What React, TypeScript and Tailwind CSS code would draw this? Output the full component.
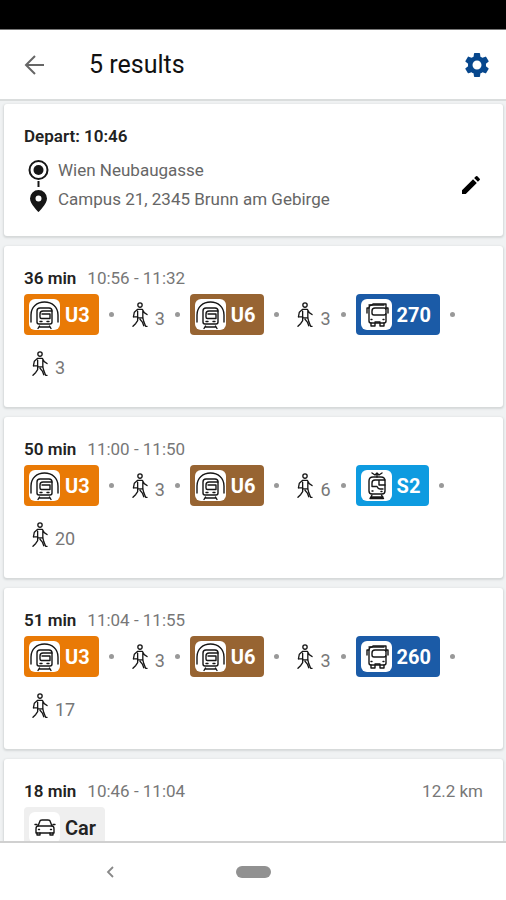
import { MdSettings, MdEdit } from "react-icons/md";

type Kind = "metro" | "bus" | "train";
type Leg = { walk: number } | { kind: Kind; line: string; color: string };

const u3: Leg = { kind: "metro", line: "U3", color: "bg-[#e97a06]" };
const u6: Leg = { kind: "metro", line: "U6", color: "bg-[#976432]" };

const trips: { duration: string; time: string; legs: Leg[] }[] = [
  {
    duration: "36 min",
    time: "10:56 - 11:32",
    legs: [u3, { walk: 3 }, u6, { walk: 3 }, { kind: "bus", line: "270", color: "bg-[#1b5ba7]" }, { walk: 3 }],
  },
  {
    duration: "50 min",
    time: "11:00 - 11:50",
    legs: [u3, { walk: 3 }, u6, { walk: 6 }, { kind: "train", line: "S2", color: "bg-[#0e9be0]" }, { walk: 20 }],
  },
  {
    duration: "51 min",
    time: "11:04 - 11:55",
    legs: [u3, { walk: 3 }, u6, { walk: 3 }, { kind: "bus", line: "260", color: "bg-[#1b5ba7]" }, { walk: 17 }],
  },
];

const stroke = {
  fill: "none",
  stroke: "#161616",
  strokeWidth: 1.4,
  strokeLinecap: "round",
  strokeLinejoin: "round",
} as const;

function MetroIcon() {
  return (
    <svg viewBox="0 0 31 31" className="size-full" {...stroke}>
      <path d="M2 23v-7C2 8 8 3 15.500 3S29 8 29 16v7" />
      <path d="M8 23V12q0-3 3-3h9q3 0 3 3v11q0 2-2 2H10q-2 0-2-2z" />
      <path d="M23 12h-9q-3 0-3 3v3q0 1.500 1.500 1.500H21V15h-8M11 22.500h2M18 22.500h2" />
      <path d="M10.500 27l-1.500 2.500M20.500 27l1.500 2.500M10 28h11" />
    </svg>
  );
}

function BusIcon() {
  return (
    <svg viewBox="0 0 31 31" className="size-full" {...stroke}>
      <path d="M11 6l1-1h13v5M11 6q-3 0-3 3v13q0 2 2 2h13q2 0 2-2v-7" />
      <path d="M8 9H6v5M25 9h2v5M8 6h15" />
      <path d="M14 9h9q2 0 2 2v3q0 2-2 2H13q-2 0-2-2v-2q0-3 3-3z" />
      <path d="M10 24v3h4v-3M19 24v3h4v-3M10 20.500h1M22 20.500h1M14 23h5" />
    </svg>
  );
}

function TrainIcon() {
  return (
    <svg viewBox="0 0 31 31" className="size-full" {...stroke}>
      <path d="M11 3l3 2 2-2 2 2 3-2M16 3v4" />
      <path d="M8 21V11q0-4 4-4h8q4 0 4 4v10q0 3-3 3H11q-3 0-3-3z" />
      <path d="M24 10H14q-3 0-3 3v3.500h5q1 2.500 3 2.500h3M18 10v5h6M11 21h1M20 21.500h1" />
      <path d="M11 25l-2 3.500M20.500 25l2 3.500M10 27h12M9 28.500h13" />
    </svg>
  );
}

function WalkIcon() {
  return (
    <svg viewBox="0 0 17 28" className="h-7 w-4" {...stroke}>
      <circle cx="8.500" cy="3.500" r="2.300" />
      <path d="M6 8h5l2 3.500 3 2M6 8l-3.500 3-1 5M6 10v7M11.500 10v7" />
      <path d="M6 17h5.500l1 4 2 5h1.500M6 17v3l-2 3-3 3M8.500 18.500l2.500 3 1.500 4M2 16h4" />
    </svg>
  );
}

function CarIcon() {
  return (
    <svg viewBox="0 0 31 31" className="size-full" {...stroke}>
      <path d="M9 14l2-5q0-1 2-1h6q2 0 2 1l2 5" />
      <path d="M9 14h14q2 0 2 3v4H7v-4q0-3 2-3zM6 12.500h2M24 12.500h2" />
      <path d="M8 21v2h3v-2M21 21v2h3v-2M9.500 17.500h1M21.500 17.500h1" />
    </svg>
  );
}

const icons = { metro: MetroIcon, bus: BusIcon, train: TrainIcon };

function LegItem({ leg }: { leg: Leg }) {
  if ("walk" in leg) {
    return (
      <div className="flex h-full items-center gap-[7px] pl-2">
        <WalkIcon />
        <span className="pt-2 text-lg leading-6 text-[#777]">{leg.walk}</span>
      </div>
    );
  }
  const Icon = icons[leg.kind];
  return (
    <div className={`flex h-full items-center gap-[5px] rounded pr-[9px] pl-[5px] ${leg.color}`}>
      <span className="size-[31px] rounded-md bg-white">
        <Icon />
      </span>
      <span className="text-xl font-bold text-white">{leg.line}</span>
    </div>
  );
}

const card = "rounded-[3px] bg-white px-5 shadow-[0_1px_2px_1px_#d5d8d9]";

export default function App() {
  return (
    <div className="flex h-screen flex-col overflow-hidden bg-white font-[Roboto,sans-serif] text-[17px] text-[#222]">
      <div className="h-[30px] shrink-0 border-b border-[#777] bg-black" />
      <header className="flex h-[71px] shrink-0 items-center border-b-2 border-[#dadddd] px-6">
        <button aria-label="Back" className="w-[65px]">
          <svg viewBox="0 0 22 22" className="size-[22px]" fill="none" stroke="#666" strokeWidth="2">
            <path d="M20 11H3M11 2l-9 9 9 9" />
          </svg>
        </button>
        <h1 className="flex-1 text-[25px] text-[#111]">5 results</h1>
        <button aria-label="Settings" className="-mr-2.5">
          <MdSettings className="size-[30px] text-[#07478d]" />
        </button>
      </header>

      <main className="flex min-h-0 flex-1 flex-col gap-2.5 overflow-hidden bg-[#f0f2f3] pt-[3px] pr-[3px] pl-1">
        <section className={`${card} flex shrink-0 items-center justify-between pt-5 pb-[22px]`}>
          <div>
            <h2 className="leading-6 font-semibold">Depart: 10:46</h2>
            <div className="mt-2 flex gap-2">
              <svg viewBox="0 0 22 56" className="ml-[3px] h-14 w-[23px]" fill="#161616">
                <circle cx="11" cy="14" r="9" fill="none" stroke="#161616" strokeWidth="2" />
                <circle cx="11" cy="14" r="5" />
                <path d="M10 25h2v6h-2z" />
                <path fillRule="evenodd" d="M11 34a8.500 8.500 0 0 0-8.500 8.500C2.500 48 11 56 11 56s8.500-8 8.500-13.500A8.500 8.500 0 0 0 11 34zm0 5.500a3 3 0 1 1 0 6 3 3 0 0 1 0-6z" />
              </svg>
              <div className="leading-[29px] text-[#666]">
                <p>Wien Neubaugasse</p>
                <p>Campus 21, 2345 Brunn am Gebirge</p>
              </div>
            </div>
          </div>
          <button aria-label="Edit" className="mt-8">
            <MdEdit className="size-6 text-black" />
          </button>
        </section>

        {trips.map((trip) => (
          <section key={trip.duration} className={`${card} shrink-0 pt-5 pb-[23px]`}>
            <div className="flex gap-[11px] leading-6">
              <h2 className="font-semibold">{trip.duration}</h2>
              <span className="text-[#777]">{trip.time}</span>
            </div>
            <ul className="mt-1 flex flex-wrap gap-y-2">
              {trip.legs.map((leg, i) => (
                <li key={i} className="flex h-[41px] items-center">
                  <LegItem leg={leg} />
                  {i < trip.legs.length - 1 && <span className="mx-2.5 size-[5px] rounded-full bg-[#999]" />}
                </li>
              ))}
            </ul>
          </section>
        ))}

        <section className={`${card} shrink-0 pt-5 pb-6`}>
          <div className="flex gap-[11px] leading-6">
            <h2 className="font-semibold">18 min</h2>
            <span className="flex-1 text-[#777]">10:46 - 11:04</span>
            <span className="text-[#777]">12.2 km</span>
          </div>
          <div className="mt-1 flex">
            <div className="flex h-[41px] items-center gap-[5px] rounded bg-[#efefef] pr-[9px] pl-[5px]">
              <span className="size-[31px] rounded-md bg-white">
                <CarIcon />
              </span>
              <span className="text-xl font-semibold">Car</span>
            </div>
          </div>
        </section>
      </main>

      <nav className="grid h-[59px] shrink-0 grid-cols-[1fr_auto_1fr] items-center border-t-2 border-[#d0d0d0]">
        <button aria-label="System back" className="ml-[104px]">
          <svg viewBox="0 0 12 14" className="h-3.5 w-3" fill="none" stroke="#888" strokeWidth="1.800">
            <path d="M9 2L4 7l5 5" />
          </svg>
        </button>
        <button aria-label="Home" className="h-3 w-[35px] rounded-full bg-[#919191]" />
      </nav>
    </div>
  );
}
